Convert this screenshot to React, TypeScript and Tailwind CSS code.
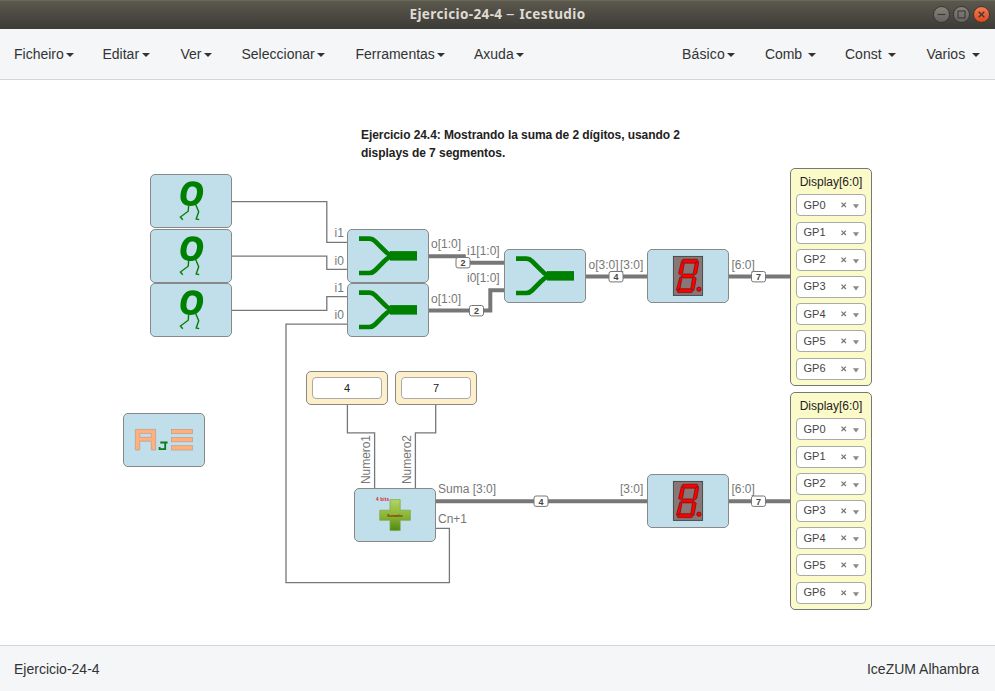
import type { ReactNode } from "react";

const SANS = "font-['Liberation_Sans',Arial,sans-serif]";

const leftMenus = [
  { label: "Ficheiro", item: "w-[88.5px]", text: "w-[52px]" },
  { label: "Editar", item: "w-[78px]", text: "w-[39.5px]" },
  { label: "Ver", item: "w-[61px]", text: "w-[23.5px]" },
  { label: "Seleccionar", item: "w-[114px]", text: "w-[75.5px]" },
  { label: "Ferramentas", item: "w-[118.5px]", text: "w-[81.5px]" },
  { label: "Axuda", item: "w-[60px]", text: "w-[42px]" },
];

const rightMenus = [
  { label: "Básico", item: "w-[83px]", text: "w-[45px] tracking-[0.15px]" },
  { label: "Comb", item: "w-[80px]", text: "w-[43px] tracking-[-0.1px]" },
  { label: "Const", item: "w-[81.5px]", text: "w-[43px]" },
  { label: "Varios", item: "w-[68.5px]", text: "w-[45px]" },
];

function Menu({ label, item, text }: { label: string; item: string; text: string }) {
  return (
    <div className={`flex shrink-0 items-center ${item}`}>
      <span className={`shrink-0 whitespace-nowrap ${text}`}>{label}</span>
      <span className="mt-px border-x-4 border-t-4 border-x-transparent border-t-[#333]" />
    </div>
  );
}

function WindowButton({ close, children }: { close?: boolean; children: ReactNode }) {
  return (
    <div
      className={`flex size-[17px] items-center justify-center rounded-full border ${
        close
          ? "border-[#43332d] bg-linear-to-b from-[#f27b53] to-[#df4717]"
          : "border-[#383732] bg-linear-to-b from-[#84827b] to-[#66645e]"
      }`}
    >
      <svg viewBox="0 0 15 15" className="size-[15px]" fill="none" stroke="#3b3a35" strokeWidth="1.1">
        {children}
      </svg>
    </div>
  );
}

function Block({ pos, children }: { pos: string; children: ReactNode }) {
  return (
    <div className={`absolute h-[54px] w-[82px] rounded-[5px] border border-[#888] bg-[#c0dfea] ${pos}`}>
      <svg viewBox="1 1 80 52" className="block h-[52px] w-[80px]">
        {children}
      </svg>
    </div>
  );
}

function ZeroIcon() {
  return (
    <g fill="none" stroke="#008000">
      <path
        d="M42.6 7.3C50 7.3 54.2 11.5 53 19.5C51.8 27.5 47 32 40.6 32C33.2 32 29.4 27.5 30.6 19.7C31.8 11.8 36.4 7.3 42.6 7.3ZM42.2 12.4C39.2 12.4 37.4 15 36.6 20C35.9 24.8 37.4 27.2 40.8 27.2C44 27.2 46.2 24.3 46.9 19.3C47.6 14.4 45.6 12.4 42.2 12.4Z"
        fill="#008000"
        fillRule="evenodd"
        stroke="none"
      />
      <path
        d="M38.7 31.5L38.2 37.2L30.4 43L32.8 45.8M45.7 30.5L48.7 37.7L46.2 45L49.2 45.6"
        strokeWidth="1.4"
      />
    </g>
  );
}

function JoinIcon() {
  return (
    <g stroke="#008000" strokeWidth="4.7" fill="none">
      <path d="M12 9.7H22.5Q25.5 9.7 28 12.2L37.5 21.5Q42 26.7 48 26.7" />
      <path d="M12 44H22.5Q25.5 44 28 41.5L37.5 32Q42 27 48 27" />
      <rect x="43" y="22.1" width="27" height="9.5" fill="#008000" stroke="none" />
    </g>
  );
}

function SevenSegmentIcon() {
  return (
    <g>
      <rect x="26.4" y="7.4" width="29.2" height="39" fill="#8b7676" stroke="#3f4246" strokeWidth=".9" />
      <g fill="#ff0000" stroke="#400" strokeWidth=".5" strokeLinejoin="round">
        <path d="M36 10.2H50.2L50.8 11.4L48.6 14.2H37.3L34.9 11.5Z" />
        <path d="M34.4 12.2L37.2 14.8L35.6 24.3L33.3 26L31.6 24.4Z" />
        <path d="M51.3 12.2L51.7 14L49.7 24.6L47.7 26L46.2 24.3L48 14.7Z" />
        <path d="M34.2 27L36.2 24.9H46L47 26.9L45.1 28.9H35.2Z" />
        <path d="M33 27.7L34.9 29.3L33.1 39.4L29.9 41.7L29.4 40.8Z" />
        <path d="M47.6 27.7L49.2 29.2L47 41.6L43.8 39.3L45.4 29.5Z" />
        <path d="M33.1 39.7H43.6L46 42.3L44.7 43.6H30.8L30.4 42.1Z" />
        <circle cx="51.9" cy="40.2" r="2.2" />
      </g>
    </g>
  );
}

function EqualsIcon() {
  return (
    <g fill="#ffb07d" stroke="#c39a83" strokeWidth=".7">
      <path fillRule="evenodd" d="M12.4 16.4H32.6V37H28.3V28.2H16.7V37H12.4ZM16.7 20.5V24.3H28.3V20.5Z" />
      <rect x="48.5" y="16.4" width="21" height="4.3" />
      <rect x="48.5" y="24.5" width="21" height="4.3" />
      <rect x="48.5" y="32.7" width="21" height="4.3" />
      <path d="M37.3 29.5H44.6M42.2 29.5V36.2H36.6V34.1" fill="none" stroke="#087c1c" strokeWidth="1.8" />
    </g>
  );
}

function SumIcon() {
  return (
    <g>
      <defs>
        <linearGradient id="plus" x1="0" y1="0" x2="0" y2="1">
          <stop offset="0" stopColor="#b3d465" />
          <stop offset=".55" stopColor="#86b531" />
          <stop offset="1" stopColor="#518812" />
        </linearGradient>
      </defs>
      <path
        d="M36 11.6H46.2V22.2H56.4V32.3H46.2V42.6H36V32.3H25.7V22.2H36Z"
        fill="url(#plus)"
        stroke="#7fa54b"
        strokeWidth=".7"
      />
      <g fontFamily="Liberation Sans, sans-serif" fontWeight="bold">
        <text x="22" y="13.3" fontSize="4.6" fill="#d0202c" textLength="13">4 bits</text>
        <text x="33" y="29" fontSize="4.2" fill="#8f2a14" textLength="16">Sumador</text>
      </g>
    </g>
  );
}

function Constant({ pos, value }: { pos: string; value: string }) {
  return (
    <div className={`absolute h-[34px] w-[82px] rounded-[5px] border border-[#888] bg-[#fcefc9] p-[5px] ${pos}`}>
      <div className="flex h-[22px] items-center justify-center rounded-[4px] border border-[#aaa] bg-white text-[11px] text-[#222]">
        {value}
      </div>
    </div>
  );
}

const pins = ["GP0", "GP1", "GP2", "GP3", "GP4", "GP5", "GP6"];

function DisplayOutput({ pos }: { pos: string }) {
  return (
    <div
      className={`absolute flex h-[218px] w-[82px] flex-col rounded-[5px] border border-[#777] bg-[#fbfac9] px-[5px] ${pos}`}
    >
      <div className="h-[25.4px] pt-[6px] text-center text-[12px] leading-[14px] text-[#222]">Display[6:0]</div>
      <div className="flex flex-col gap-[5.2px]">
        {pins.map((pin) => (
          <div
            key={pin}
            className="flex h-[22px] items-center rounded-[4px] border border-[#aaa] bg-white pl-[6.5px] text-[11px] text-[#444]"
          >
            <span className="w-[35px] leading-none">{pin}</span>
            <svg viewBox="0 0 20 10" className="h-[10px] w-[20px]">
              <path d="M2.5 2.6L6.9 7M6.9 2.6L2.5 7" stroke="#777" strokeWidth="1.3" />
              <path d="M13.9 4.2H20L17 8.4Z" fill="#888" />
            </svg>
          </div>
        ))}
      </div>
    </div>
  );
}

const labels = [
  { text: "i1", x: 334.5, y: 237 },
  { text: "i0", x: 334.5, y: 265 },
  { text: "i1", x: 334.5, y: 292 },
  { text: "i0", x: 334.5, y: 319 },
  { text: "o[1:0]", x: 431, y: 248 },
  { text: "o[1:0]", x: 431, y: 303 },
  { text: "i1[1:0]", x: 467, y: 255 },
  { text: "i0[1:0]", x: 467, y: 282 },
  { text: "o[3:0]", x: 588.5, y: 269 },
  { text: "[3:0]", x: 620, y: 269 },
  { text: "[6:0]", x: 731.5, y: 269 },
  { text: "Suma [3:0]", x: 438, y: 493 },
  { text: "Cn+1", x: 438, y: 523 },
  { text: "[3:0]", x: 620, y: 493 },
  { text: "[6:0]", x: 731.5, y: 493 },
];

const badges = [
  { text: "2", x: 456, y: 257.5 },
  { text: "2", x: 469.5, y: 305.5 },
  { text: "4", x: 609, y: 271.5 },
  { text: "7", x: 751.5, y: 271.5 },
  { text: "4", x: 534, y: 496 },
  { text: "7", x: 751.5, y: 496 },
];

function Wires() {
  return (
    <svg viewBox="0 80 995 565" className="absolute inset-0 h-[565px] w-[995px]">
      <g fill="none" stroke="#777" strokeWidth="1.3">
        <path d="M232 201.7H326.8V242.3H347" />
        <path d="M232 256.2H326.8V269.4H347" />
        <path d="M232 310.4H326.8V296.6H347" />
        <path d="M436 528.4H449.4V582.6H286V324.1H347" />
        <path d="M347.4 405V432.8H374.6V488" />
        <path d="M435.7 405V432.8H415.4V488" />
      </g>
      <g fill="none" stroke="#777" strokeWidth="4">
        <path d="M429 256.2H463.8V262.8H504" />
        <path d="M429 310.6H490.3V290.3H504" />
        <path d="M586 276.5H647M729 276.5H790" />
        <path d="M436 501.2H647M729 501.2H790" />
      </g>
      <g fontFamily="Liberation Sans, Arial, sans-serif" fontSize="12" fill="#777">
        {labels.map((l, i) => (
          <text key={i} x={l.x} y={l.y}>{l.text}</text>
        ))}
        <text transform="translate(370 484) rotate(-90)" textLength="49">Numero1</text>
        <text transform="translate(410.5 484) rotate(-90)" textLength="49">Numero2</text>
      </g>
      <g fontFamily="Liberation Sans, Arial, sans-serif" fontSize="9" fontWeight="bold" textAnchor="middle">
        {badges.map((b, i) => (
          <g key={i}>
            <rect x={b.x} y={b.y} width="14" height="10.4" rx="2" fill="#fff" stroke="#777" strokeWidth="1" />
            <text x={b.x + 7} y={b.y + 8.6} fill="#444">{b.text}</text>
          </g>
        ))}
      </g>
    </svg>
  );
}

export default function App() {
  return (
    <div className={`flex h-[691px] w-[995px] flex-col overflow-hidden bg-white ${SANS}`}>
      <header className="grid h-[29px] shrink-0 grid-cols-[1fr_auto_1fr] items-center border-t border-[#6a6755] bg-linear-to-b from-[#5b584e] to-[#3d3b37]">
        <span />
        <h1 className="font-['Noto_Sans',sans-serif] text-[13.5px] font-bold leading-none tracking-[0.38px] text-[#dfdbd2]">
          Ejercicio-24-4 <span className="inline-block scale-x-125 px-[1px] font-normal">–</span> Icestudio
        </h1>
        <div className="flex items-center justify-end gap-[3px] pr-[5px] pb-[2px]">
          <WindowButton><path d="M3.5 7.5H11.5" /></WindowButton>
          <WindowButton><rect x="4" y="4" width="7" height="7" /></WindowButton>
          <WindowButton close><path d="M4.7 4.7L10.3 10.3M10.3 4.7L4.7 10.3" strokeWidth="1.4" /></WindowButton>
        </div>
      </header>

      <nav className="flex h-[51px] shrink-0 items-center justify-between border-b border-[#d3d6d9] bg-[#f4f6f8] pl-[14px] text-[14px] text-[#333]">
        <div className="flex">{leftMenus.map((m) => <Menu key={m.label} {...m} />)}</div>
        <div className="flex">{rightMenus.map((m) => <Menu key={m.label} {...m} />)}</div>
      </nav>

      <main className="relative h-[565px] shrink-0 overflow-hidden">
        <Wires />
        <p className="absolute left-[361px] top-[46px] w-[330px] text-[12px] font-bold leading-[18px] text-[#222]">
          <span className="block whitespace-nowrap tracking-[-0.07px]">Ejercicio 24.4: Mostrando la suma de 2 dígitos, usando 2</span>
          <span className="block whitespace-nowrap tracking-[-0.05px]">displays de 7 segmentos.</span>
        </p>
        <Block pos="left-[150px] top-[94px]"><ZeroIcon /></Block>
        <Block pos="left-[150px] top-[149px]"><ZeroIcon /></Block>
        <Block pos="left-[150px] top-[203px]"><ZeroIcon /></Block>
        <Block pos="left-[347px] top-[149px]"><JoinIcon /></Block>
        <Block pos="left-[347px] top-[203px]"><JoinIcon /></Block>
        <Block pos="left-[504px] top-[169px]"><JoinIcon /></Block>
        <Block pos="left-[647px] top-[169px]"><SevenSegmentIcon /></Block>
        <Block pos="left-[647px] top-[394px]"><SevenSegmentIcon /></Block>
        <Block pos="left-[123px] top-[333px]"><EqualsIcon /></Block>
        <Block pos="left-[354px] top-[408px]"><SumIcon /></Block>
        <Constant pos="left-[306px] top-[291px]" value="4" />
        <Constant pos="left-[395px] top-[291px]" value="7" />
        <DisplayOutput pos="left-[790px] top-[88px]" />
        <DisplayOutput pos="left-[790px] top-[312px]" />
      </main>

      <footer className="flex h-[46px] shrink-0 items-center justify-between border-t border-[#d3d6d9] bg-[#f4f6f8] pl-[14px] pr-[16px] pt-px text-[14px] text-[#333]">
        <span>Ejercicio-24-4</span>
        <span>IceZUM Alhambra</span>
      </footer>
    </div>
  );
}
